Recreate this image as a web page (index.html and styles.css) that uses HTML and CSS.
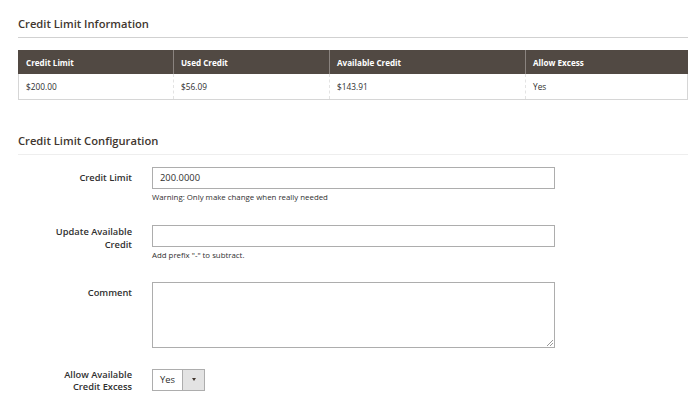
FILE: index.html
```html
<!DOCTYPE html>
<html>
<head>
<meta charset="utf-8">
<link rel="stylesheet" href="styles.css">
</head>
<body>
<div class="page">
  <section class="info">
    <h2 class="section-title">Credit Limit Information</h2>
    <table class="grid">
      <thead>
        <tr><th class="c1">Credit Limit</th><th class="c2">Used Credit</th><th class="c3">Available Credit</th><th class="c4">Allow Excess</th></tr>
      </thead>
      <tbody>
        <tr><td>$200.00</td><td>$56.09</td><td>$143.91</td><td>Yes</td></tr>
      </tbody>
    </table>
  </section>
  <section class="config">
    <h2 class="section-title light">Credit Limit Configuration</h2>
    <div class="field f1">
      <label class="label">Credit Limit</label>
      <div class="control">
        <div class="input">200.0000</div>
        <div class="note">Warning: Only make change when really needed</div>
      </div>
    </div>
    <div class="field f2">
      <label class="label">Update Available<br>Credit</label>
      <div class="control">
        <div class="input"></div>
        <div class="note">Add prefix "-" to subtract.</div>
      </div>
    </div>
    <div class="field f3">
      <label class="label">Comment</label>
      <div class="control">
        <div class="textarea"><span class="grip"></span></div>
      </div>
    </div>
    <div class="field f4">
      <label class="label">Allow Available<br>Credit Excess</label>
      <div class="control">
        <div class="select"><span class="sel-val">Yes</span><span class="sel-btn"><span class="tri"></span></span></div>
      </div>
    </div>
  </section>
</div>
</body>
</html>
```
FILE: styles.css
```css
* { box-sizing: border-box; }
html, body { margin: 0; padding: 0; background: #fff; }
body { font-family: "Open Sans", "Liberation Sans", sans-serif; color: #303030; }
.page { width: 670px; margin-left: 18px; padding-top: 15px; }
.section-title {
  margin: 0; font-size: 11.2px; font-weight: 600; color: #41362f;
  line-height: 17px; padding-bottom: 5px; border-bottom: 1px solid #d1d1d1;
}
.section-title.light { border-bottom-color: #eeeeee; }
.grid { width: 100%; border-collapse: collapse; margin-top: 12px; font-size: 8.3px; }
.grid th {
  background: #514943; color: #fff; font-weight: 700; text-align: left; font-size: 8.1px;
  height: 24px; padding: 0 7px; border-left: 1px solid #8a837f; border-right: 1px solid #8a837f;
}
.grid th.c1 { width: 155px; border-left-color: #514943; }
.grid th.c2 { width: 156px; }
.grid th.c3 { width: 196px; }
.grid th.c4 { border-right-color: #514943; }
.grid td {
  height: 25px; padding: 0 7px; color: #303030;
  border-top: none; border-left: 1px dashed #e3e3e3; border-right: 1px dashed #e3e3e3;
  border-bottom: 1px solid #d6d6d6;
}
.grid td:first-child { border-left: 1px solid #d6d6d6; }
.grid td:last-child { border-right: 1px solid #d6d6d6; }
.config { margin-top: 32px; }
.field { display: flex; gap: 20px; }
.f1 { margin-top: 12px; }
.f2 { margin-top: 23px; }
.f3 { margin-top: 22px; }
.f4 { margin-top: 21px; }
.label {
  width: 114px; flex: none; text-align: right; font-size: 9.3px; font-weight: 600;
  color: #303030; line-height: 12.5px; padding-top: 5px;
}
.f2 .label { padding-top: 0; line-height: 13px; }
.f3 .label { padding-top: 5px; }
.f4 .label { padding-top: 0; line-height: 12.5px; }
.control { flex: none; width: 403px; }
.input {
  height: 22px; border: 1px solid #adadad; background: #fff;
  font-size: 9.4px; line-height: 20px; padding: 0 7px; color: #303030;
}
.note { font-size: 7.85px; color: #303030; margin-top: 3px; line-height: 10px; }
.textarea { position: relative; height: 66px; border: 1px solid #adadad; background: #fff; }
.grip {
  position: absolute; right: 1px; bottom: 1px; width: 6px; height: 6px;
  background: linear-gradient(135deg, transparent 45%, #999 45%, #999 55%, transparent 55%, transparent 70%, #999 70%, #999 80%, transparent 80%);
}
.select {
  display: flex; width: 53px; height: 22px; border: 1px solid #adadad; background: #fff;
}
.sel-val { width: 30px; font-size: 9.4px; line-height: 20px; padding-left: 7px; border-right: 1px solid #adadad; }
.sel-btn { flex: 1; background: #e3e3e3; display: flex; align-items: center; justify-content: center; }
.tri { width: 0; height: 0; border-left: 2.5px solid transparent; border-right: 2.5px solid transparent; border-top: 3px solid #41362f; }
```
